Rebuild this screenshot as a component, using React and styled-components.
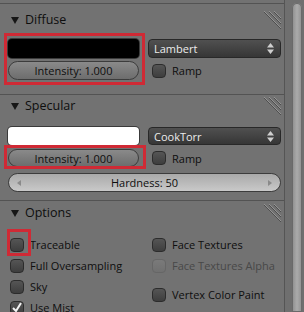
import styled, { createGlobalStyle } from "styled-components";

const Global = createGlobalStyle`
    html, body {
        margin: 0;
        padding: 0;
        background: #727272;
        overflow: hidden;
    }
    body {
        font-family: 'Open Sans', 'Noto Sans', sans-serif;
    }
`

const Window = styled.div`
    display: flex;
    width: 304px;
    height: 312px;
    overflow: hidden;
    background: #727272;
`

const Main = styled.div`
    width: 284px;
    padding-top: 3px;
    display: flex;
    flex-direction: column;
`

const ScrollTrack = styled.div`
    flex: 1;
    border-left: 1px solid #555555;
    background: #6f6f6f;
    padding: 3px 3px 0 7px;
    display: flex;
`

const Thumb = styled.div`
    width: 10px;
    border-radius: 5px 5px 0 0;
    background: linear-gradient(to right, #8c8c8c, #ababab 50%, #8f8f8f);
    box-shadow: inset 0 0 0 1px #6a6a6a;
`

const Panel = styled.section`
    border-top: 1px solid #535353;
    padding-bottom: ${p => p.$bottom}px;
`

const Header = styled.div`
    height: ${p => p.$h}px;
    display: flex;
    align-items: center;
    padding-left: 11px;
    padding-right: 2px;
    gap: 6px;
    font-size: 12.5px;
    color: #0e0e0e;
`

const Title = styled.span`
    flex: 1;
    line-height: 1;
`

const Body = styled.div`
    padding: ${p => p.$top}px 3px 0 8px;
    display: grid;
    grid-template-columns: 131px 133px;
    column-gap: 9px;
    row-gap: ${p => p.$gap || 0}px;
`

const Wide = styled.div`
    grid-column: 1 / span 2;
    margin-top: ${p => p.$mt || 0}px;
`

const ColorField = styled.div`
    height: ${p => p.$h}px;
    border-radius: 4px;
    background: ${p => p.$color};
    box-shadow: 0 0 0 1px #3a3a3a;
`

const Slider = styled.div`
    height: ${p => p.$h}px;
    box-sizing: border-box;
    border-radius: 10px;
    border: 1px solid #3c3c3c;
    background: ${p => p.$light
        ? "linear-gradient(#a9a9a9, #c9c9c9)"
        : "linear-gradient(#8a8a8a, #6d6d6d)"};
    display: flex;
    align-items: center;
    justify-content: center;
    position: relative;
    font-size: 11px;
    color: #0e0e0e;
`

const Arrow = styled.span`
    position: absolute;
    top: 50%;
    margin-top: -3px;
    ${p => p.$side}: 8px;
    width: 0;
    height: 0;
    border-top: 3px solid transparent;
    border-bottom: 3px solid transparent;
    ${p => p.$side === "left" ? "border-right" : "border-left"}: 4px solid #8a8a8a;
`

const Dropdown = styled.div`
    height: ${p => p.$h}px;
    box-sizing: border-box;
    border-radius: 4px;
    border: 1px solid #282828;
    background: linear-gradient(#505050, #363636);
    display: flex;
    align-items: center;
    justify-content: space-between;
    padding: 0 6px 0 5px;
    font-size: 11px;
    color: #ececec;
`

const Check = styled.label`
    display: flex;
    align-items: center;
    gap: 6px;
    height: ${p => p.$h || 21}px;
    padding-left: ${p => p.$indent || 0}px;
    margin-top: ${p => p.$mt || 0}px;
    font-size: 11px;
    color: ${p => p.$disabled ? "#484848" : "#0e0e0e"};
`

const Box = styled.span`
    width: 14px;
    height: 14px;
    box-sizing: border-box;
    border-radius: 4px;
    border: 1px solid ${p => p.$disabled ? "#666666" : "#2c2c2c"};
    background: ${p => p.$disabled
        ? "linear-gradient(#7a7a7a, #707070)"
        : "linear-gradient(#555555, #3e3e3e)"};
    display: flex;
    align-items: center;
    justify-content: center;
    flex-shrink: 0;
`

const Marked = styled.div`
    position: relative;
    &::after {
        content: "";
        position: absolute;
        inset: ${p => p.$inset};
        border: 3px solid #cf2a35;
        pointer-events: none;
    }
`

const Column = styled.div`
    display: flex;
    flex-direction: column;
    gap: ${p => p.$gap || 0}px;
`

function Triangle(){
    return (
        <svg width="8" height="7" viewBox="0 0 8 7">
            <path d="M0 0 L8 0 L4 7 Z" fill="#161616" />
        </svg>
    )
}

function Grip(){
    return (
        <svg width="19" height="19" viewBox="0 0 19 19">
            <g strokeWidth="1">
                <path d="M1 1 L18 18" stroke="#4e4e4e" />
                <path d="M1 0 L18 17" stroke="#949494" />
                <path d="M6 1 L18 13" stroke="#4e4e4e" />
                <path d="M6 0 L18 12" stroke="#949494" />
                <path d="M11 1 L18 8" stroke="#4e4e4e" />
                <path d="M11 0 L18 7" stroke="#949494" />
            </g>
        </svg>
    )
}

function UpDown(){
    return (
        <svg width="7" height="11" viewBox="0 0 7 11">
            <path d="M0 4.5 L3.5 0 L7 4.5 Z M0 6.5 L3.5 11 L7 6.5 Z" fill="#cfcfcf" />
        </svg>
    )
}

function Tick(){
    return (
        <svg width="12" height="12" viewBox="0 0 12 12">
            <path d="M2 6 L5 9 L10 1" stroke="#f2f2f2" strokeWidth="2" fill="none" />
        </svg>
    )
}

function CheckItem({ label, checked, disabled, indent, mt, h, marked }){
    const box = (
        <Box $disabled={disabled}>{checked && <Tick />}</Box>
    )
    return (
        <Check $indent={indent} $mt={mt} $h={h} $disabled={disabled}>
            {marked ? <Marked $inset="-9px -7px -4px -3px">{box}</Marked> : box}
            <span>{label}</span>
        </Check>
    )
}

function PanelHeader({ title, h }){
    return (
        <Header $h={h}>
            <Triangle />
            <Title>{title}</Title>
            <Grip />
        </Header>
    )
}

export default function App(){
    return (
        <Window>
            <Global />
            <Main>
                <Panel $bottom={14}>
                    <PanelHeader title="Diffuse" h={32} />
                    <Body $top={3}>
                        <Marked $inset="-6px -6px -5px -4px">
                            <Column $gap={3}>
                                <ColorField $h={19} $color="#000000" />
                                <Slider $h={19}>Intensity: 1.000</Slider>
                            </Column>
                        </Marked>
                        <Column $gap={3}>
                            <Dropdown $h={19}>Lambert<UpDown /></Dropdown>
                            <CheckItem label="Ramp" indent={4} h={19} />
                        </Column>
                    </Body>
                </Panel>

                <Panel $bottom={8}>
                    <PanelHeader title="Specular" h={22} />
                    <Body $top={10} $gap={4}>
                        <ColorField $h={18} $color="#ffffff" />
                        <Dropdown $h={18}>CookTorr<UpDown /></Dropdown>
                        <Marked $inset="-4px -7px -2px -4px">
                            <Slider $h={18}>Intensity: 1.000</Slider>
                        </Marked>
                        <CheckItem label="Ramp" indent={4} h={18} />
                        <Wide $mt={2}>
                            <Slider $h={19} $light>
                                <Arrow $side="left" />
                                Hardness: 50
                                <Arrow $side="right" />
                            </Slider>
                        </Wide>
                    </Body>
                </Panel>

                <Panel $bottom={0}>
                    <PanelHeader title="Options" h={24} />
                    <Body $top={9}>
                        <Column>
                            <CheckItem label="Traceable" indent={2} marked />
                            <CheckItem label="Full Oversampling" indent={2} />
                            <CheckItem label="Sky" indent={2} />
                            <CheckItem label="Use Mist" indent={2} checked />
                        </Column>
                        <Column>
                            <CheckItem label="Face Textures" indent={4} />
                            <CheckItem label="Face Textures Alpha" indent={4} disabled />
                            <CheckItem label="Vertex Color Paint" indent={4} mt={8} />
                        </Column>
                    </Body>
                </Panel>
            </Main>
            <ScrollTrack>
                <Thumb />
            </ScrollTrack>
        </Window>
    )
}
